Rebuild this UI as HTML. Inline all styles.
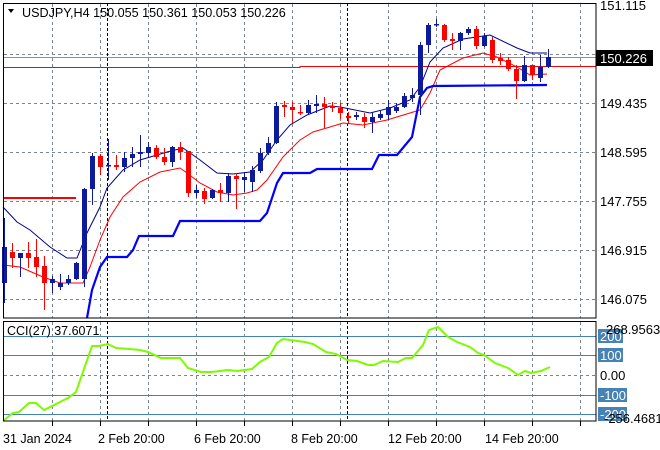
<!DOCTYPE html>
<html><head><meta charset="utf-8"><style>
html,body{margin:0;padding:0;background:#fff;width:660px;height:450px;overflow:hidden}
svg{display:block;font-family:"Liberation Sans",sans-serif}
</style></head><body>
<svg id="s" width="660" height="450" viewBox="0 0 660 450" xmlns="http://www.w3.org/2000/svg">
<rect width="660" height="450" fill="#fff"/>
<g id="grid" stroke="#7a8590" stroke-width="1" stroke-dasharray="3,3"></g>
<line x1="3" y1="57.5" x2="596" y2="57.5" stroke="#8a9098"/>
<polyline points="3,67.5 300,67.5 300,66.5 596,66.5" fill="none" stroke="#f00" stroke-width="1"/>
<line x1="3" y1="198" x2="76" y2="198" stroke="#f00" stroke-width="2"/>
<line x1="107.5" y1="3" x2="107.5" y2="318" stroke="#000" stroke-dasharray="3,2"/>
<line x1="347.5" y1="3" x2="347.5" y2="318" stroke="#000" stroke-dasharray="3,2"/>
<line x1="107.5" y1="321" x2="107.5" y2="421" stroke="#000" stroke-dasharray="3,2"/>
<line x1="347.5" y1="321" x2="347.5" y2="421" stroke="#000" stroke-dasharray="3,2"/>
<polyline fill="none" stroke="#00008b" stroke-width="1" points="3,207 17,222 30,230 50,247 67,258 77,258 87,233 100,207 107,188 123,170 140,160 167,152 183,148 200,160 217,173 233,174 250,172 263,160 277,140 290,125 307,115 330,106 340,107 370,113 390,108 410,100 420,87 430,62 443,48 463,39 490,35 517,48 530,53 547,53"/>
<polyline fill="none" stroke="#f00" stroke-width="1" points="3,265 20,267 43,277 60,283 83,283 90,267 100,240 110,217 123,197 140,182 160,172 180,168 187,173 200,183 217,192 233,195 247,193 257,190 267,180 283,157 300,140 313,132 330,127 343,123 363,125 387,120 410,113 420,110 430,93 440,70 463,58 483,53 497,57 517,67 530,75 547,74"/>
<polyline fill="none" stroke="#0000ff" stroke-width="2.2" points="87,318 92,290 100,267 107,257 127,257 133,250 139,236 173,236 180,221 260,221 267,213 277,183 283,173 310,173 317,169 372,169 379,155 397,155 412,137 420,97 427,88 433,86 547,85"/>
<g id="candles"></g>
<rect x="3.5" y="3.5" width="592.5" height="314.5" fill="none" stroke="#000"/>
<g stroke="#4682b4" stroke-width="1">
<line x1="4" y1="336.5" x2="596" y2="336.5"/><line x1="4" y1="355.5" x2="596" y2="355.5"/>
<line x1="4" y1="395.5" x2="596" y2="395.5"/><line x1="4" y1="414.5" x2="596" y2="414.5"/>
</g>
<line x1="4" y1="375.5" x2="596" y2="375.5" stroke="#7a8590" stroke-dasharray="3,3"/>
<polyline fill="none" stroke="#7cfc00" stroke-width="2" points="3,421 13,413 19,412 29,403 36,403 44,410 68,398 76,392 92,346 99,346 108,344 116,348 129,349 140,350 148,352 161,358 180,358 188,368 201,372 212,372 228,370 237,371 252,369 260,362 269,357 277,343 283,339 305,342 313,344 326,352 336,354 347,360 357,361 368,365 374,365 383,361 398,362 406,358 412,358 423,345 429,330 438,327 448,337 457,342 470,347 478,353 484,355 495,363 508,368 518,375 525,371 531,373 541,371 550,367"/>
<rect x="3.5" y="321.5" width="592.5" height="99.5" fill="none" stroke="#000"/>
<text x="7" y="335" font-size="12.5" fill="#000">CCI(27) 37.6071</text>
<g font-size="13">
<rect x="598" y="329" width="25" height="14" fill="#4682b4"/><text x="600" y="341" fill="#fff">200</text>
<rect x="598" y="348" width="25" height="14" fill="#4682b4"/><text x="600" y="360" fill="#fff">100</text>
<text x="600" y="380" fill="#000">0.00</text>
<rect x="598" y="388" width="29" height="14" fill="#4682b4"/><text x="600" y="400" fill="#fff">-100</text>
<rect x="598" y="407" width="29" height="14" fill="#4682b4"/><text x="600" y="419" fill="#fff">-200</text>
<text x="606" y="334" fill="#000">268.9563</text>
<text x="604" y="423" fill="#000">-256.4681</text>
</g>
<g font-size="13" fill="#000">
<text x="600" y="10">151.115</text>
<rect x="596" y="50" width="57" height="16" fill="#000"/><text x="600" y="63" fill="#fff">150.226</text>
<text x="600" y="108">149.435</text>
<text x="600" y="157">148.595</text>
<text x="600" y="206">147.755</text>
<text x="600" y="255">146.915</text>
<text x="600" y="304">146.075</text>
</g>
<g font-size="12.5" fill="#000">
<text x="3" y="443">31 Jan 2024</text>
<text x="98" y="443">2 Feb 20:00</text>
<text x="194" y="443">6 Feb 20:00</text>
<text x="291" y="443">8 Feb 20:00</text>
<text x="388" y="443">12 Feb 20:00</text>
<text x="485" y="443">14 Feb 20:00</text>
</g>
<path d="M8,9 L14,9 L11,13 Z" fill="#000"/>
<text x="22" y="17" font-size="12.6" fill="#000">USDJPY,H4  150.055 150.361 150.053 150.226</text>
</svg>
<script>
var ns="http://www.w3.org/2000/svg";
function el(p,t,a){var e=document.createElementNS(ns,t);for(var k in a)e.setAttribute(k,a[k]);p.appendChild(e);return e;}
var g=document.getElementById('grid');
var xs=[52,100,148,196,244,292,340,388,436,484,532,580];
xs.forEach(function(x){el(g,'line',{x1:x+.5,y1:4,x2:x+.5,y2:318});el(g,'line',{x1:x+.5,y1:322,x2:x+.5,y2:421});
 el(document.getElementById('s'),'line',{x1:x+.5,y1:421,x2:x+.5,y2:426,stroke:'#000'});});
[54,103,152,201,250,299].forEach(function(y){el(g,'line',{x1:4,y1:y+.5,x2:596,y2:y+.5});});
var C=[['b',247,283,218,303],['r',252,258,243,268],['b',253,258,253,277],['r',253,258,242,268],['r',257,267,239,277],['r',266,283,256,310],['b',279,283,276,293],['b',283,287,274,290],['b',279,283,275,285],['b',263,279,262,280],['b',189,279,188,287],['b',156,189,153,205],['r',156,167,154,175],['b',165,166,139,180],['r',165,167,155,170],['b',158,167,152,172],['b',154,158,147,167],['b',152,154,135,167],['b',147,153,142,157],['r',148,157,145,159],['r',157,162,148,165],['b',147,162,146,167],['r',147,152,142,160],['r',151,193,151,197],['b',190,193,185,198],['r',191,199,188,204],['b',190,198,189,199],['r',190,193,183,202],['b',176,193,173,202],['r',176,179,173,209],['b',177,180,173,192],['b',170,182,166,192],['b',153,171,148,173],['b',143,153,137,155],['b',106,143,102,144],['r',105,107,101,117],['r',107,110,102,123],['r',112,113,105,115],['b',105,113,100,115],['b',104,106,95,113],['r',104,107,97,128],['r',106,108,102,112],['r',108,113,103,119],['r',116,118,112,124],['b',115,117,112,120],['r',117,122,113,128],['b',117,122,112,133],['b',114,118,110,120],['b',107,115,100,120],['b',107,111,103,113],['b',96,107,93,108],['b',95,98,88,102],['b',45,95,42,115],['b',25,45,23,53],['b',24,25,19,27],['r',25,40,24,42],['r',39,41,33,50],['b',33,41,32,50],['b',29,33,27,35],['r',29,46,26,49],['b',36,46,33,47],['r',40,60,37,63],['r',58,61,53,65],['r',60,69,57,71],['r',69,81,65,99],['b',65,81,56,82],['r',65,75,65,80],['b',67,78,55,82],['b',57,67,49,68]];
var cg=document.getElementById('candles');
C.forEach(function(c,i){var x=4+8*i;var col=c[0]=='b'?'#0d1a9c':'#f00';
 el(cg,'line',{x1:x+.5,y1:c[3],x2:x+.5,y2:c[4],stroke:col});
 var h=Math.max(c[2]-c[1],1.5);el(cg,'rect',{x:x-2,y:c[1],width:5,height:h,fill:col});});
</script>
</body></html>
